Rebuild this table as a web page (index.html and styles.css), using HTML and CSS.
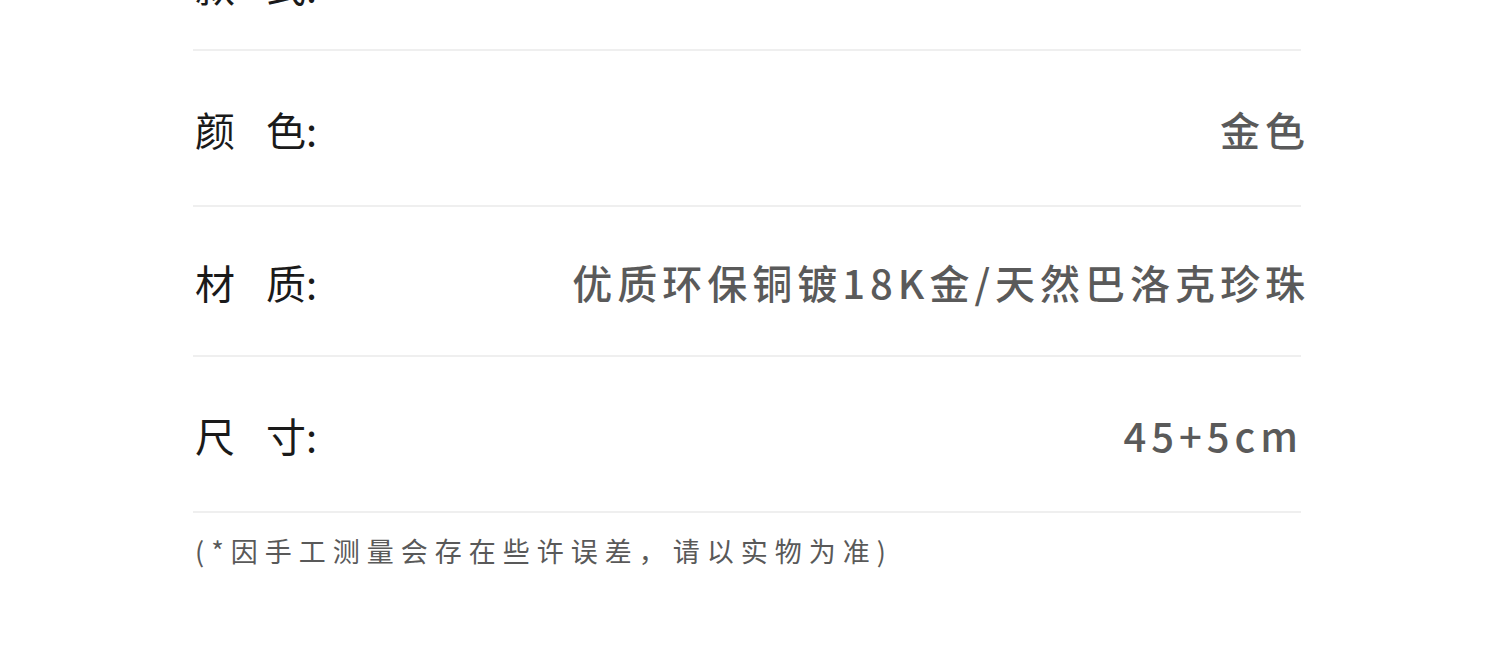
FILE: index.html
```html
<!DOCTYPE html>
<html lang="zh-CN">
<head>
    <meta charset="UTF-8">
    <meta name="viewport" content="width=device-width, initial-scale=1.0">
    <title>商品参数</title>
    <link rel="stylesheet" href="styles.css">
</head>
<body>
    <div class="spec">
        <div class="spec-row spec-row-first">
            <span class="spec-label">款 式:</span>
            <span class="spec-value"></span>
        </div>
        <div class="spec-row">
            <span class="spec-label">颜 色:</span>
            <span class="spec-value">金色</span>
        </div>
        <div class="spec-row spec-row-mid">
            <span class="spec-label">材 质:</span>
            <span class="spec-value">优质环保铜镀18K金/天然巴洛克珍珠</span>
        </div>
        <div class="spec-row">
            <span class="spec-label">尺 寸:</span>
            <span class="spec-value spec-value-size">45+5cm</span>
        </div>
        <p class="spec-note">(*因手工测量会存在些许误差，请以实物为准)</p>
    </div>
</body>
</html>
```

FILE: styles.css
```css
/* Reset some default styles */
* {
    margin: 0;
    padding: 0;
    box-sizing: border-box;
}

html, body {
    height: 100%;
    overflow: hidden;
}

body {
    font-family: "Noto Sans CJK SC", "Noto Sans", sans-serif;
    background-color: #fff;
    color: #222;
}

.spec {
    width: 1108px;
    margin-left: 193px;
    margin-top: -81px;
}

.spec-row {
    display: flex;
    justify-content: space-between;
    align-items: center;
    height: 156px;
    border-bottom: 2px solid #efefef;
}

.spec-row-first {
    height: 132px;
}

.spec-row-mid {
    height: 150px;
}

.spec-label {
    font-size: 40px;
    word-spacing: 22px;
    color: #1a1a1a;
    line-height: 1;
    padding-top: 2px;
    padding-left: 2px;
}

.spec-value {
    font-size: 40px;
    font-weight: 500;
    letter-spacing: 5px;
    color: #5a5a5a;
    line-height: 1;
    margin-right: -9px;
    padding-top: 2px;
}

.spec-value-size {
    margin-right: -2px;
}

.spec-note {
    font-size: 27px;
    letter-spacing: 7px;
    color: #595959;
    line-height: 1;
    padding-top: 24px;
    padding-left: 2px;
}
```
